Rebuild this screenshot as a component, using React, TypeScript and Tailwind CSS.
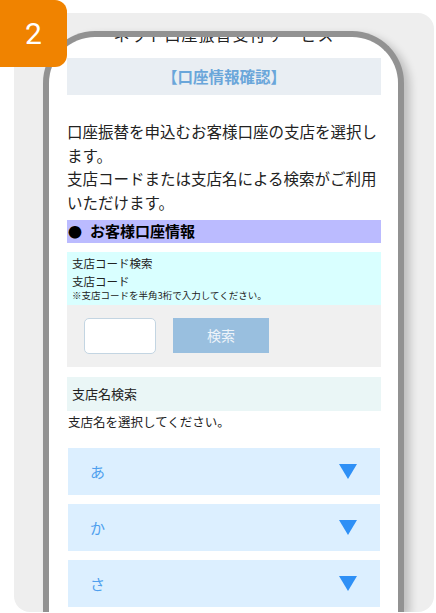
import React from "react";

const jp = { fontFamily: '"Noto Sans CJK JP", "Noto Sans", sans-serif' };

function Tri() {
  return (
    <svg width="18" height="15" viewBox="0 0 18 15">
      <polygon points="0,0 18,0 9,15" fill="#2f90f6" />
    </svg>
  );
}

function Acc({ label }: { label: string }) {
  return (
    <div className="h-[47px] bg-[#dcefff] flex items-center justify-between pl-[22px] pr-[23px]">
      <span className="text-[15px] text-[#4f9fee] leading-none">{label}</span>
      <Tri />
    </div>
  );
}

export default function App() {
  return (
    <div className="relative w-[436px] h-[613px] bg-white overflow-hidden" style={jp}>
      <div className="pt-[13px] pl-[14px] pr-[2px]">
        <div className="h-[599px] rounded-[16px] bg-[#eeeeee] overflow-hidden pt-[18px] pl-[29px] pr-[30px]">
          <div className="h-full bg-white border-[6px] border-b-0 border-[#929292] rounded-t-[52px] overflow-hidden shadow-[6px_4px_9px_rgba(0,0,0,0.2)]">
            <div className="px-[18px] pr-[17px]">
              <div className="-mt-[13px] h-[20px] text-center text-[16px] leading-[20px] text-[#222] tracking-[1px]">
                ネット口座振替受付サービス
              </div>
              <div className="mt-[14px] h-[37px] bg-[#e9eef3] flex items-center justify-center text-[15.5px] font-bold text-[#6aa6da]">
                【口座情報確認】
              </div>
              <p className="mt-[25px] text-[15.5px] leading-[23.7px] text-[#222]">
                口座振替を申込むお客様口座の支店を選択します。
                <br />
                支店コードまたは支店名による検索がご利用いただけます。
              </p>
              <div className="mt-[5px] h-[23px] bg-[#bbbbff] flex items-center pl-[1px] text-[15px] font-bold text-black">
                <span className="text-[14px] mr-[8px]">●</span>
                <span>お客様口座情報</span>
              </div>
              <div className="mt-[9px] bg-[#d9ffff] pl-[5px] pt-[3px] pb-[4px] text-[#222]">
                <div className="text-[11.5px] leading-[16px]">支店コード検索</div>
                <div className="mt-[3px] text-[11.5px] leading-[15px]">支店コード</div>
                <div className="text-[9.5px] leading-[12px]">※支店コードを半角3桁で入力してください。</div>
              </div>
              <div className="h-[62px] bg-[#f0f0f0] flex items-start pt-[13px] pl-[17px]">
                <div className="w-[72px] h-[36px] bg-white border border-[#c3d5e2] rounded-[5px]" />
                <div className="ml-[17px] w-[96px] h-[35px] bg-[#99bfdf] flex items-center justify-center text-[14px] text-[#eef4fa]">
                  検索
                </div>
              </div>
              <div className="mt-[10px] h-[34px] bg-[#eaf6f6] flex items-center pl-[5px] text-[13px] text-[#222]">
                支店名検索
              </div>
              <div className="mt-[2px] pl-[1px] text-[12.5px] leading-[18px] text-[#222]">
                支店名を選択してください。
              </div>
              <div className="mt-[17px] mx-[1px] flex flex-col gap-[9px]">
                <Acc label="あ" />
                <Acc label="か" />
                <Acc label="さ" />
              </div>
            </div>
          </div>
        </div>
      </div>
      <div
        className="absolute left-0 top-0 w-[67px] h-[67px] bg-[#f08300] rounded-tr-[12px] rounded-br-[12px] flex items-center justify-center text-white text-[30px]"
        style={{ fontFamily: 'Roboto, "Noto Sans", sans-serif' }}
      >
        2
      </div>
    </div>
  );
}
